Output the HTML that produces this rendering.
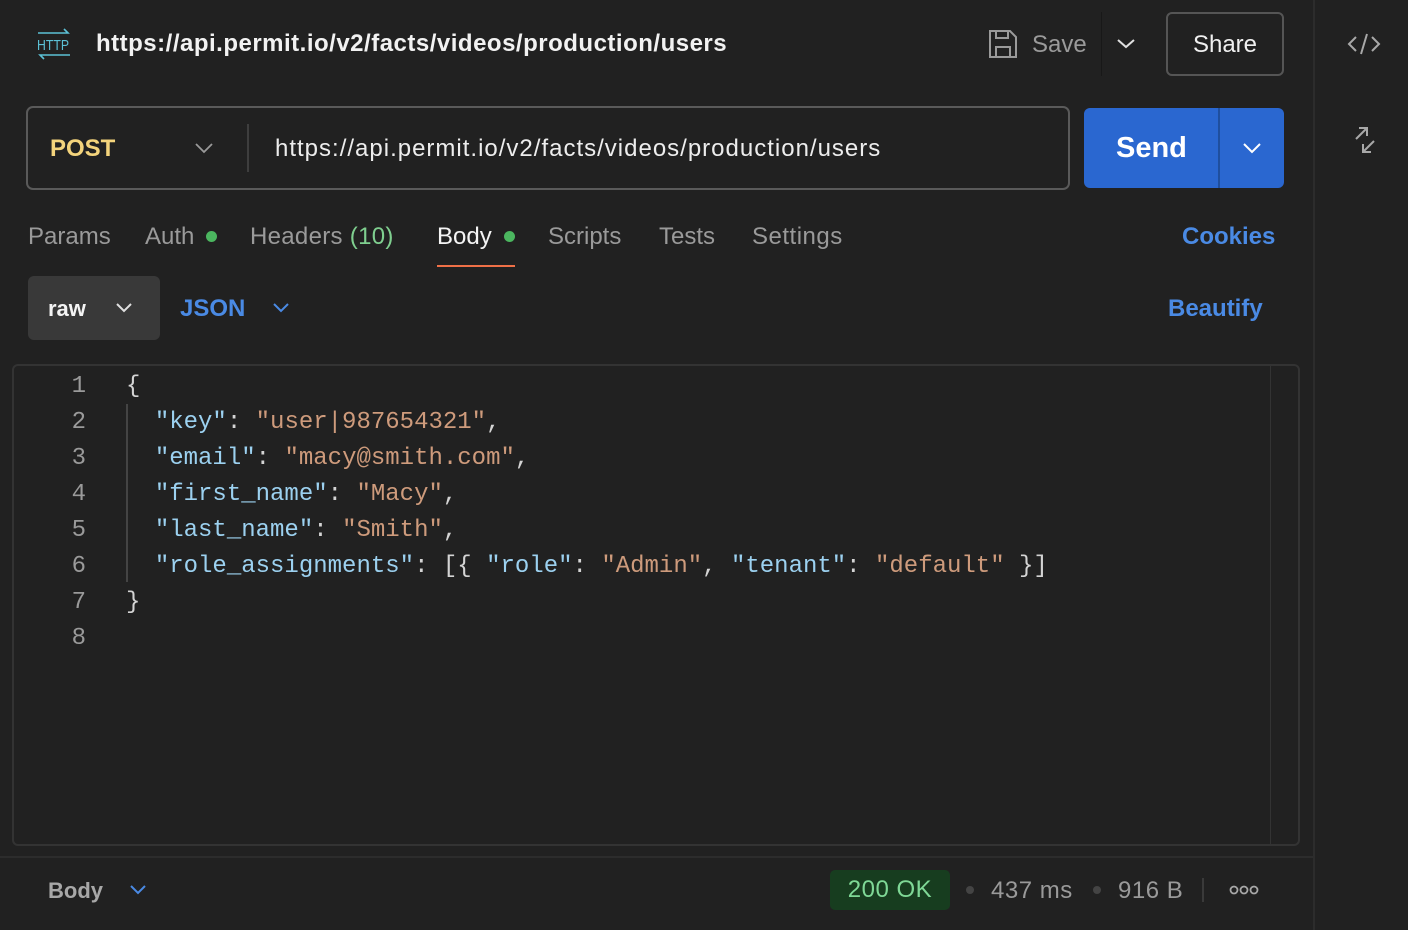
<!DOCTYPE html>
<html><head><meta charset="utf-8"><style>
*{margin:0;padding:0;box-sizing:border-box}
body{width:1408px;height:930px;background:#212121;font-family:"Liberation Sans",sans-serif;color:#e0e0e0;position:relative;overflow:hidden}
.a{position:absolute;white-space:nowrap}
.code{font-family:"Liberation Mono",monospace;font-size:24px;line-height:36px}
.k{color:#9cd1f0}.s{color:#ce9b7c}.p{color:#d4d4d4}
.ln{color:#9a9a9a;text-align:right;width:30px}
</style></head><body>
<div class="a" style="left:1313px;top:0;width:2px;height:930px;background:#2c2c2c"></div>
<svg class="a" style="left:1346px;top:30px" width="36" height="28" viewBox="0 0 36 28" fill="none" stroke="#a8a8a8" stroke-width="2"><path d="M10 7 3 14 10 21M26 7 33 14 26 21M21 4 15 24"/></svg>
<svg class="a" style="left:1352px;top:126px" width="26" height="28" viewBox="0 0 26 28" fill="none" stroke="#a8a8a8" stroke-width="2"><path d="M4 13 15 2M7 2H15V10M22 15 11 26M11 18V26H19"/></svg>
<svg class="a" style="left:36px;top:28px" width="36" height="32" viewBox="0 0 36 32" fill="none" stroke="#5cc1d6" stroke-width="1.6"><path d="M2 5H32L28 1M34 27H4L8 31"/><text x="1" y="22" font-family="Liberation Sans Narrow,Liberation Sans" font-size="15" fill="#5cc1d6" stroke="none" textLength="32" lengthAdjust="spacingAndGlyphs">HTTP</text></svg>
<div class="a" style="left:96px;top:30px;font-size:24px;font-weight:bold;color:#f2f2f2;letter-spacing:0.5px">https://api.permit.io/v2/facts/videos/production/users</div>
<svg class="a" style="left:988px;top:29px" width="30" height="30" viewBox="0 0 30 30" fill="none" stroke="#9a9a9a" stroke-width="2"><path d="M2 2H22L28 8V28H2Z M8 2V9H20V2 M8 28V18H22V28"/></svg>
<div class="a" style="left:1032px;top:31px;font-size:24px;color:#9a9a9a">Save</div>
<div class="a" style="left:1101px;top:12px;width:1px;height:64px;background:#181818"></div>
<svg class="a" style="left:1116px;top:36px" width="20" height="14" viewBox="0 0 20 14" fill="none" stroke="#e0e0e0" stroke-width="2"><path d="M2 4 10 11 18 4"/></svg>
<div class="a" style="left:1166px;top:12px;width:118px;height:64px;border:2px solid #555;border-radius:6px;font-size:24px;color:#f0f0f0;text-align:center;line-height:62px">Share</div>
<div class="a" style="left:26px;top:106px;width:1044px;height:84px;border:2px solid #5a5a5a;border-radius:7px"></div>
<div class="a" style="left:50px;top:135px;font-size:24px;font-weight:bold;color:#f4d47c">POST</div>
<svg class="a" style="left:194px;top:141px" width="20" height="14" viewBox="0 0 20 14" fill="none" stroke="#9a9a9a" stroke-width="1.8"><path d="M2 3 10 11 18 3"/></svg>
<div class="a" style="left:247px;top:124px;width:2px;height:48px;background:#3e3e3e"></div>
<div class="a" style="left:275px;top:135px;font-size:24px;color:#ededed;letter-spacing:1px">https://api.permit.io/v2/facts/videos/production/users</div>
<div class="a" style="left:1084px;top:108px;width:200px;height:80px;background:#2a67d0;border-radius:6px"></div>
<div class="a" style="left:1218px;top:108px;width:2px;height:80px;background:#1f4f9e"></div>
<div class="a" style="left:1116px;top:132px;font-size:29px;font-weight:bold;color:#fff">Send</div>
<svg class="a" style="left:1242px;top:141px" width="20" height="14" viewBox="0 0 20 14" fill="none" stroke="#fff" stroke-width="2"><path d="M2 3 10 11 18 3"/></svg>
<div class="a" style="top:223px;left:28px;font-size:24px;color:#9a9a9a">Params</div>
<div class="a" style="top:223px;left:145px;font-size:24px;color:#9a9a9a">Auth</div>
<div class="a" style="top:231px;left:206px;width:11px;height:11px;border-radius:50%;background:#4bb65f"></div>
<div class="a" style="top:223px;left:250px;font-size:24px;color:#9a9a9a;letter-spacing:0.3px">Headers <span style="color:#7fcf8f">(10)</span></div>
<div class="a" style="top:223px;left:437px;font-size:24px;color:#f4f4f4">Body</div>
<div class="a" style="top:231px;left:504px;width:11px;height:11px;border-radius:50%;background:#4bb65f"></div>
<div class="a" style="top:265px;left:437px;width:78px;height:2px;background:#ef7047"></div>
<div class="a" style="top:223px;left:548px;font-size:24px;color:#9a9a9a">Scripts</div>
<div class="a" style="top:223px;left:659px;font-size:24px;color:#9a9a9a">Tests</div>
<div class="a" style="top:223px;left:752px;font-size:24px;color:#9a9a9a;letter-spacing:0.5px">Settings</div>
<div class="a" style="top:223px;left:1182px;font-size:24px;font-weight:bold;color:#4a8ae4">Cookies</div>
<div class="a" style="left:28px;top:276px;width:132px;height:64px;background:#393939;border-radius:6px"></div>
<div class="a" style="left:48px;top:296px;font-size:22px;font-weight:bold;color:#f4f4f4">raw</div>
<svg class="a" style="left:115px;top:301px" width="18" height="14" viewBox="0 0 18 14" fill="none" stroke="#e0e0e0" stroke-width="2"><path d="M2 3 9 10 16 3"/></svg>
<div class="a" style="left:180px;top:295px;font-size:24px;font-weight:bold;color:#4a8ae4">JSON</div>
<svg class="a" style="left:272px;top:301px" width="18" height="14" viewBox="0 0 18 14" fill="none" stroke="#4a8ae4" stroke-width="2"><path d="M2 3 9 10 16 3"/></svg>
<div class="a" style="left:1168px;top:295px;font-size:24px;font-weight:bold;color:#4a8ae4">Beautify</div>
<div class="a" style="left:12px;top:364px;width:1288px;height:482px;border:2px solid #333;border-radius:6px"></div>
<div class="a" style="left:1270px;top:366px;width:1px;height:478px;background:#333"></div>
<div class="a" style="left:126px;top:404px;width:2px;height:178px;background:#444"></div>
<div class="a code ln" style="left:56px;top:369px">1<br>2<br>3<br>4<br>5<br>6<br>7<br>8</div>
<div class="a code p" style="left:126px;top:369px">{<br>
&nbsp;&nbsp;<span class="k">"key"</span>: <span class="s">"user|987654321"</span>,<br>
&nbsp;&nbsp;<span class="k">"email"</span>: <span class="s">"macy@smith.com"</span>,<br>
&nbsp;&nbsp;<span class="k">"first_name"</span>: <span class="s">"Macy"</span>,<br>
&nbsp;&nbsp;<span class="k">"last_name"</span>: <span class="s">"Smith"</span>,<br>
&nbsp;&nbsp;<span class="k">"role_assignments"</span>: [{ <span class="k">"role"</span>: <span class="s">"Admin"</span>, <span class="k">"tenant"</span>: <span class="s">"default"</span> }]<br>
}</div>
<div class="a" style="left:0;top:856px;width:1313px;height:2px;background:#2c2c2c"></div>
<div class="a" style="left:48px;top:878px;font-size:22px;font-weight:bold;color:#a8a8a8">Body</div>
<svg class="a" style="left:129px;top:883px" width="18" height="14" viewBox="0 0 18 14" fill="none" stroke="#4a8ae4" stroke-width="2"><path d="M2 3 9 10 16 3"/></svg>
<div class="a" style="left:830px;top:870px;width:120px;height:40px;background:#173d1f;border-radius:5px;font-size:24px;color:#7fd896;text-align:center;line-height:40px;letter-spacing:0.5px">200 OK</div>
<div class="a" style="left:966px;top:886px;width:8px;height:8px;border-radius:50%;background:#444"></div>
<div class="a" style="left:991px;top:877px;font-size:24px;color:#9a9a9a;letter-spacing:0.5px">437 ms</div>
<div class="a" style="left:1093px;top:886px;width:8px;height:8px;border-radius:50%;background:#444"></div>
<div class="a" style="left:1118px;top:877px;font-size:24px;color:#9a9a9a;letter-spacing:0.5px">916 B</div>
<div class="a" style="left:1202px;top:878px;width:2px;height:24px;background:#3a3a3a"></div>
<svg class="a" style="left:1229px;top:883px" width="30" height="14" viewBox="0 0 30 14" fill="none" stroke="#a8a8a8" stroke-width="1.8"><circle cx="5" cy="7" r="3.5"/><circle cx="15" cy="7" r="3.5"/><circle cx="25" cy="7" r="3.5"/></svg>
</body></html>
